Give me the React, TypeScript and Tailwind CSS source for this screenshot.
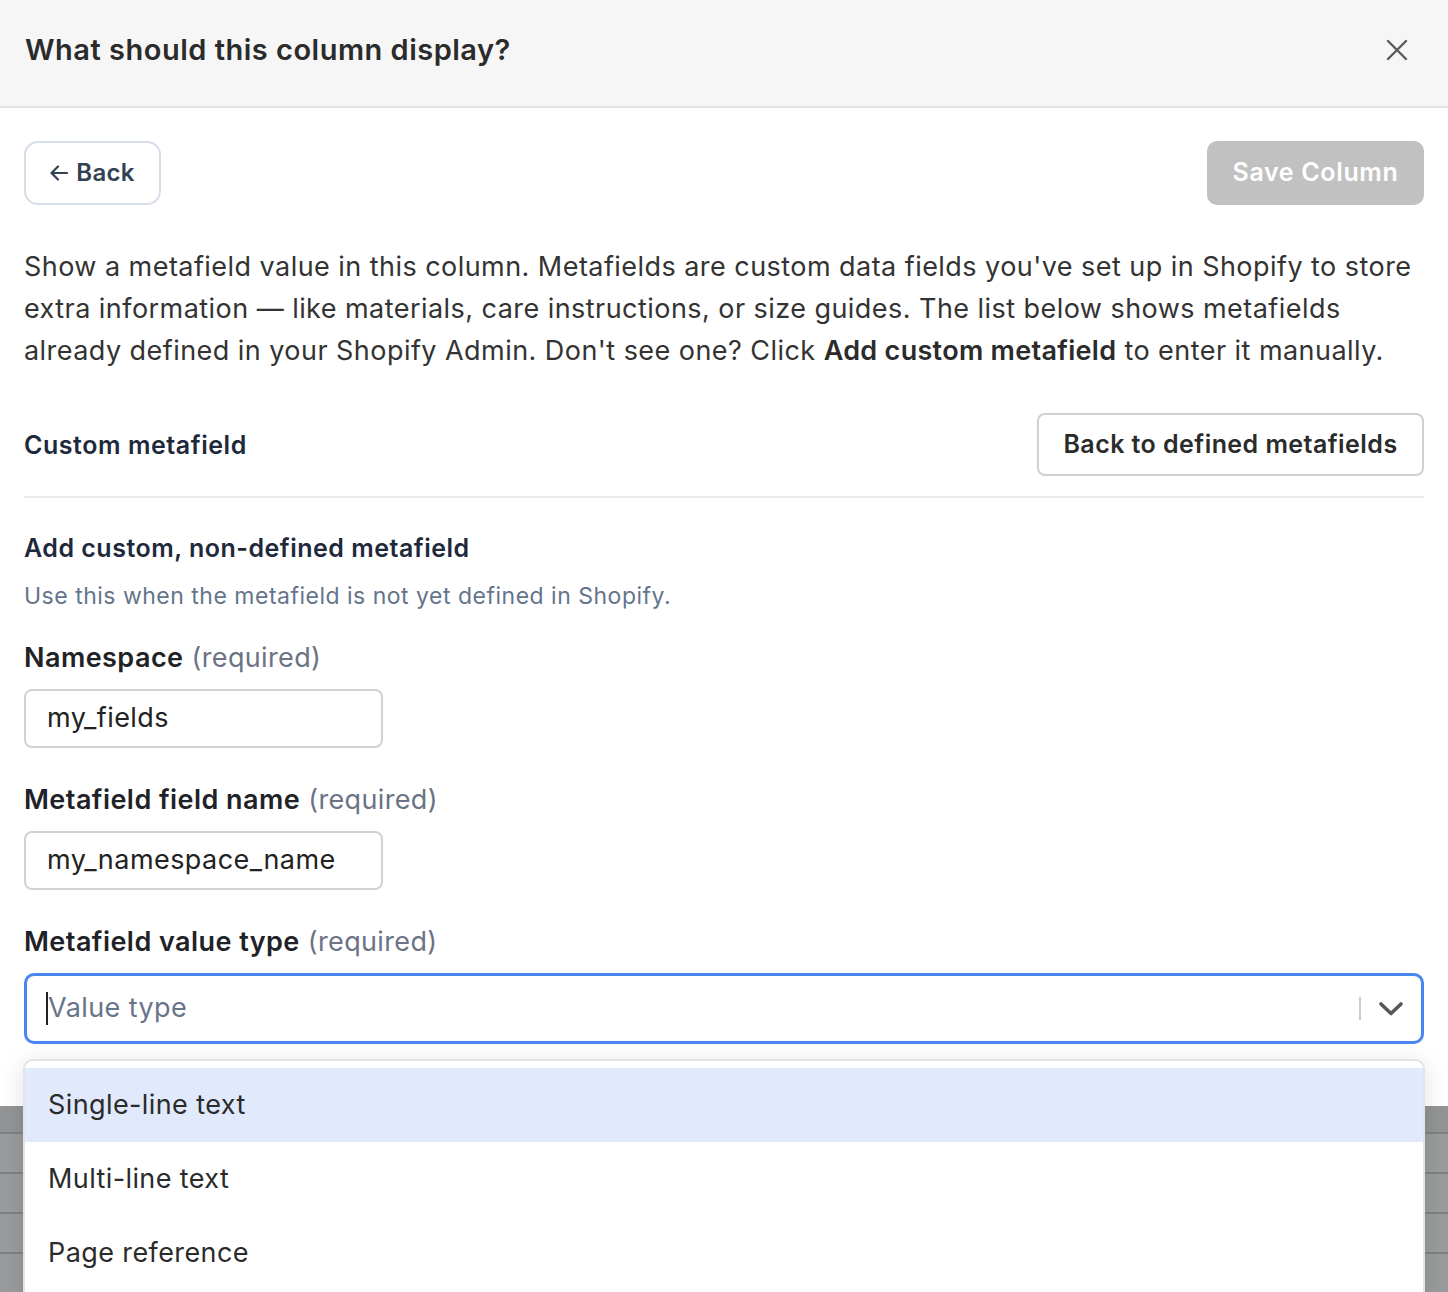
import React from "react";

const options = ["Single-line text", "Multi-line text", "Page reference"];

const Label = ({ name }: { name: string }) => (
  <div className="text-[27px] leading-[36px] tracking-[0.45px]">
    <span className="font-semibold text-[#1f2328]">{name}</span>{" "}
    <span className="text-[#6b7385] tracking-[0.35px]">(required)</span>
  </div>
);

const App = () => {
  return (
    <div
      className="w-[1448px] h-[1292px] overflow-hidden bg-[#9a9b9c] flex flex-col"
      style={{ fontFamily: "Inter, 'Noto Sans', sans-serif" }}
    >
      <div className="bg-white relative">
        {/* header */}
        <div className="h-[108px] bg-[#f6f6f6] border-b-2 border-[#e3e3e3] flex items-center justify-between pl-[25px] pr-[40px] pb-[6px]">
          <h1 className="text-[29px] leading-[36px] font-semibold text-[#2b2b2b] tracking-[0.5px]">
            What should this column display?
          </h1>
          <svg width="22" height="22" viewBox="0 0 22 22" fill="none" stroke="#5a5a5a" strokeWidth="2.4" strokeLinecap="round">
            <path d="M2 2L20 20M20 2L2 20" />
          </svg>
        </div>

        <div className="px-[24px] pb-[62px]">
          <div className="flex items-center justify-between pt-[33px]">
            <button className="h-[64px] w-[137px] flex items-center justify-center gap-[8px] rounded-[14px] border-2 border-[#d8dee9] text-[24px] font-semibold text-[#334155] tracking-[0.3px]">
              <svg width="18" height="16" viewBox="0 0 18 16" fill="none" stroke="#334155" strokeWidth="2.2" strokeLinecap="round" strokeLinejoin="round">
                <path d="M17 8H1.5M8 1.5L1.5 8L8 14.5" />
              </svg>
              Back
            </button>
            <button className="h-[64px] w-[217px] rounded-[10px] bg-[#c1c1c1] text-white text-[25px] font-semibold tracking-[0.65px]">
              Save Column
            </button>
          </div>

          <p className="mt-[41px] text-[27px] leading-[42px] text-[#333333] tracking-[0.45px] whitespace-nowrap">
            Show a metafield value in this column. Metafields are custom data fields you've set up in Shopify to store
            <br />
            extra information — like materials, care instructions, or size guides. The list below shows metafields
            <br />
            already defined in your Shopify Admin. Don't see one? Click{" "}
            <strong className="font-semibold text-[#2b2b2b] tracking-[0.3px]">Add custom metafield</strong> to enter it manually.
          </p>

          <div className="mt-[41px] flex items-center justify-between">
            <div className="text-[25px] leading-[32px] font-semibold text-[#1e293b] tracking-[0.55px]">Custom metafield</div>
            <button className="h-[63px] w-[387px] rounded-[8px] border-2 border-[#d0d0d0] text-[25px] font-semibold text-[#2b2b2b] tracking-[0.45px]">
              Back to defined metafields
            </button>
          </div>

          <div className="mt-[20px] border-t-2 border-[#e9e9ec]" />

          <div className="mt-[34px] text-[25px] leading-[32px] font-semibold text-[#1e293b] tracking-[0.5px]">
            Add custom, non-defined metafield
          </div>
          <div className="mt-[17px] text-[23px] leading-[30px] text-[#64748b] tracking-[0.5px]">
            Use this when the metafield is not yet defined in Shopify.
          </div>

          <div className="mt-[29px]">
            <Label name="Namespace" />
          </div>
          <div className="mt-[13px] h-[59px] w-[359px] rounded-[8px] border-2 border-[#d2d2d2] flex items-center pl-[21px] text-[27px] tracking-[0.4px] text-[#222222]">
            my_fields
          </div>

          <div className="mt-[34px]">
            <Label name="Metafield field name" />
          </div>
          <div className="mt-[13px] h-[59px] w-[359px] rounded-[8px] border-2 border-[#d2d2d2] flex items-center pl-[21px] text-[27px] tracking-[0.45px] text-[#222222]">
            my_namespace_name
          </div>

          <div className="mt-[34px]">
            <Label name="Metafield value type" />
          </div>
          <div className="relative mt-[13px]">
            <div className="h-[71px] rounded-[10px] border-[3px] border-[#4a86ef] flex items-center pl-[19px] pr-[17px]">
              <span className="w-[2px] h-[33px] bg-[#222222]" />
              <span className="text-[27px] text-[#687488] tracking-[0.4px]">Value type</span>
              <div className="ml-auto flex items-center">
                <span className="w-[2px] h-[23px] bg-[#cccccc]" />
                <svg className="ml-[17px]" width="26" height="16" viewBox="0 0 26 16" fill="none" stroke="#575757" strokeWidth="3.6" strokeLinecap="round" strokeLinejoin="round">
                  <path d="M3 3L13 12.5L23 3" />
                </svg>
              </div>
            </div>

            <div className="absolute -left-px -right-px top-[calc(100%+15px)] rounded-[10px] border-2 border-[#e4e4e4] bg-white shadow-[0_4px_24px_rgba(0,0,0,0.12)] pt-[7px] pb-[20px]">
              {options.map((o, i) => (
                <div
                  key={o}
                  className={`h-[74px] flex items-center pl-[23px] text-[27px] tracking-[0.4px] text-[#2b2b2b] ${i === 0 ? "bg-[#e0eafc]" : ""}`}
                >
                  {o}
                </div>
              ))}
            </div>
          </div>
        </div>
      </div>

      {/* page behind the overlay */}
      <div className="flex flex-col">
        <div className="h-[28px] border-b-2 border-[#7f8081] bg-[#939495]" />
        <div className="h-[40px] border-b-2 border-[#7f8081]" />
        <div className="h-[40px] border-b-2 border-[#7f8081]" />
        <div className="h-[40px] border-b-2 border-[#7f8081]" />
      </div>
    </div>
  );
};

export default App;
